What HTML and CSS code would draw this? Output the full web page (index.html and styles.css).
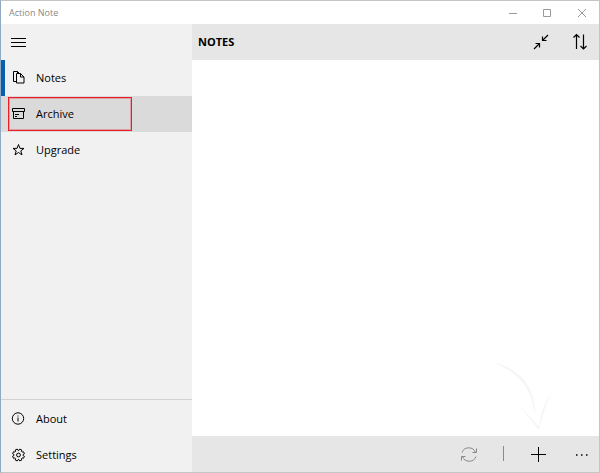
FILE: index.html
```html
<!DOCTYPE html>
<html lang="en">
<head>
    <meta charset="UTF-8">
    <meta name="viewport" content="width=device-width, initial-scale=1.0">
    <title>Action Note</title>
    <link rel="stylesheet" href="styles.css">
</head>
<body>

    <!-- Title bar -->
    <header class="title-bar">
        <span class="title">Action Note</span>
        <div class="window-buttons">
            <button type="button" aria-label="Minimize">
                <svg width="10" height="10" viewBox="0 0 10 10"><path d="M0 5.5h8"/></svg>
            </button>
            <button type="button" aria-label="Maximize">
                <svg width="10" height="10" viewBox="0 0 10 10"><path d="M.5 1.500h7v7h-7z"/></svg>
            </button>
            <button type="button" aria-label="Close">
                <svg width="10" height="10" viewBox="0 0 10 10"><path d="M1 1l8 8M9 1l-8 8"/></svg>
            </button>
        </div>
    </header>

    <div class="app">
        <!-- Side menu -->
        <nav class="sidebar">
            <button type="button" class="menu-button" aria-label="Menu">
                <svg width="18" height="18" viewBox="0 0 18 18"><path d="M1 5.5h15M1 9.500h15M1 13.500h15"/></svg>
            </button>
            <a href="#notes" class="menu-item active">
                <svg width="18" height="18" viewBox="0 0 18 18"><path d="M6.500 12.500h-3v-10h4l2 2M7.500 2.500v2M6.500 4.500h4l3.500 3.500v6h-7.500zM10.500 4.500v3.500h3.500"/></svg>
                <span>Notes</span>
            </a>
            <a href="#archive" class="menu-item selected">
                <svg width="18" height="18" viewBox="0 0 18 18"><path d="M2.500 3.500h12v3h-12zM3.500 6.500v7h10v-7M5 9.500h4M5 11.500h2"/></svg>
                <span>Archive</span>
            </a>
            <a href="#upgrade" class="menu-item">
                <svg width="18" height="18" viewBox="0 0 18 18"><path d="M8.500 3.500l1.500 3.900h4l-3.200 2.500 1.200 4-3.500-2.400-3.500 2.400 1.200-4-3.200-2.500h4z"/></svg>
                <span>Upgrade</span>
            </a>
            <div class="menu-bottom">
                <a href="#about" class="menu-item">
                    <svg width="18" height="18" viewBox="0 0 18 18"><circle cx="8" cy="8.500" r="5.700"/><path d="M8 7.500v4M8 5.500v1"/></svg>
                    <span>About</span>
                </a>
                <a href="#settings" class="menu-item">
                    <svg width="18" height="18" viewBox="0 0 18 18">
                        <g transform="translate(8.500 9)">
                            <path d="M4.600 .5L5.900 1.250L5 3.300L3.600 2.900L2.900 3.600L3.300 5L1.250 5.900L.5 4.600H-.5L-1.250 5.900L-3.300 5L-2.900 3.600L-3.600 2.900L-5 3.300L-5.900 1.250L-4.600 .5V-.5L-5.900 -1.250L-5 -3.300L-3.600 -2.900L-2.900 -3.600L-3.300 -5L-1.250 -5.900L-.5 -4.600H.5L1.250 -5.900L3.300 -5L2.900 -3.600L3.600 -2.900L5 -3.300L5.900 -1.250L4.600 -.5z"/>
                            <circle r="1.900"/>
                        </g>
                    </svg>
                    <span>Settings</span>
                </a>
            </div>
        </nav>

        <!-- Notes list -->
        <main class="content">
            <div class="toolbar">
                <h1>NOTES</h1>
                <button type="button" aria-label="Collapse">
                    <svg width="18" height="18" viewBox="0 0 18 18"><path d="M2 16l5.500-5.500M3.500 10.500h4v4M16 2l-5.500 5.500M10.500 3.500v4h4"/></svg>
                </button>
                <button type="button" aria-label="Sort">
                    <svg width="18" height="18" viewBox="0 0 18 18"><path d="M5.500 16v-14.500M2.500 4.500l3-3 3 3M12.500 1.500v14.500M9.500 13l3 3 3-3"/></svg>
                </button>
            </div>
            <div class="notes">
                <svg class="hint-arrow" width="64" height="72" viewBox="0 0 64 72">
                    <path d="M3 3C31 9 46 28 46 54L44 48C42 28 27 12 3 3z"/>
                    <path d="M29 45Q40 57 50 68Q51 51 63 32Q54 51 50 71Q40 59 29 45z"/>
                </svg>
            </div>
            <div class="command-bar">
                <button type="button" aria-label="Sync" disabled>
                    <svg width="18" height="18" viewBox="0 0 18 18"><path d="M2 7.500a7.200 7.200 0 0 1 13.500 0M16.500 3.500v4h-4M16 11.500a7.200 7.200 0 0 1-13.500 0M1.500 15.500v-4h4"/></svg>
                </button>
                <span class="separator"></span>
                <button type="button" aria-label="Add note">
                    <svg width="18" height="18" viewBox="0 0 18 18"><path d="M9.500 2v15M2 9.500h15"/></svg>
                </button>
                <button type="button" class="more" aria-label="More">
                    <svg width="18" height="18" viewBox="0 0 18 18"><path d="M4 10h1.500M9 10h1.500M14 10h1.500"/></svg>
                </button>
            </div>
        </main>
    </div>

</body>
</html>
```

FILE: styles.css
```css
*,
*::before,
*::after {
    box-sizing: border-box;
}
body {
    margin: 0;
    height: 100vh;
    display: flex;
    flex-direction: column;
    font-family: "Open Sans", "Noto Sans", sans-serif;
    font-size: 11px;
    color: #000;
    background: white;
    border: 1px solid #c4c4c4;
    border-left-color: #8fa9c2;
}
button {
    display: flex;
    align-items: center;
    justify-content: center;
    padding: 0;
    border: none;
    background: none;
    color: inherit;
}
svg {
    flex: none;
    fill: none;
    stroke: currentColor;
    stroke-width: 1;
}

/* Title bar */
.title-bar {
    display: flex;
    align-items: center;
    justify-content: space-between;
    height: 23px;
    padding-left: 8px;
}
.title {
    font-size: 9px;
    color: #888;
}
.window-buttons {
    display: flex;
    height: 100%;
    color: #999;
}
.window-buttons button {
    width: 34px;
}

.app {
    flex: 1;
    display: flex;
    min-height: 0;
}

/* Side menu */
.sidebar {
    width: 191px;
    display: flex;
    flex-direction: column;
    background: #f1f1f1;
}
.menu-button {
    width: 36px;
    height: 36px;
}
.menu-button svg,
.toolbar svg {
    stroke-width: 1.2;
}
.menu-item {
    position: relative;
    display: flex;
    align-items: center;
    gap: 8px;
    height: 36px;
    padding-left: 9px;
    padding-bottom: 1px;
    color: #000;
    text-decoration: none;
}
.menu-item svg {
    margin-top: 1px;
}
.menu-item.active::before {
    content: "";
    position: absolute;
    left: 0;
    top: 0;
    width: 4px;
    height: 100%;
    background: #0560ae;
}
.menu-item.selected {
    background: #dadada;
}
.menu-item.selected::after {
    content: "";
    position: absolute;
    left: 7px;
    top: 1px;
    width: 124px;
    height: 34px;
    border: 1px solid #ee1c24;
    box-shadow: inset 0 0 0 1px rgba(238, 28, 36, 0.3);
}
.menu-bottom {
    margin-top: auto;
    border-top: 1px solid #d2d2d2;
}
.menu-bottom .menu-item {
    padding-bottom: 0;
}

/* Notes list */
.content {
    flex: 1;
    display: flex;
    flex-direction: column;
}
.toolbar,
.command-bar {
    display: flex;
    align-items: center;
    height: 36px;
    background: #e6e6e6;
}
.toolbar h1 {
    flex: 1;
    margin: 0;
    padding-left: 6px;
    padding-bottom: 1px;
    font-size: 11px;
    font-weight: bold;
}
.toolbar button {
    width: 39px;
    height: 36px;
}
.notes {
    position: relative;
    flex: 1;
}
.hint-arrow {
    position: absolute;
    right: 46px;
    bottom: 5px;
    fill: #f5f5f5;
    stroke: none;
}
.command-bar {
    justify-content: flex-end;
}
.command-bar button {
    width: 51px;
    height: 36px;
}
.command-bar button:disabled {
    color: #888;
}
.separator {
    width: 1px;
    height: 15px;
    margin: 0 8px 2px 9px;
    background: #8a8a8a;
}
.command-bar .more {
    width: 36px;
}
.more svg {
    stroke-width: 1.500;
}
```
